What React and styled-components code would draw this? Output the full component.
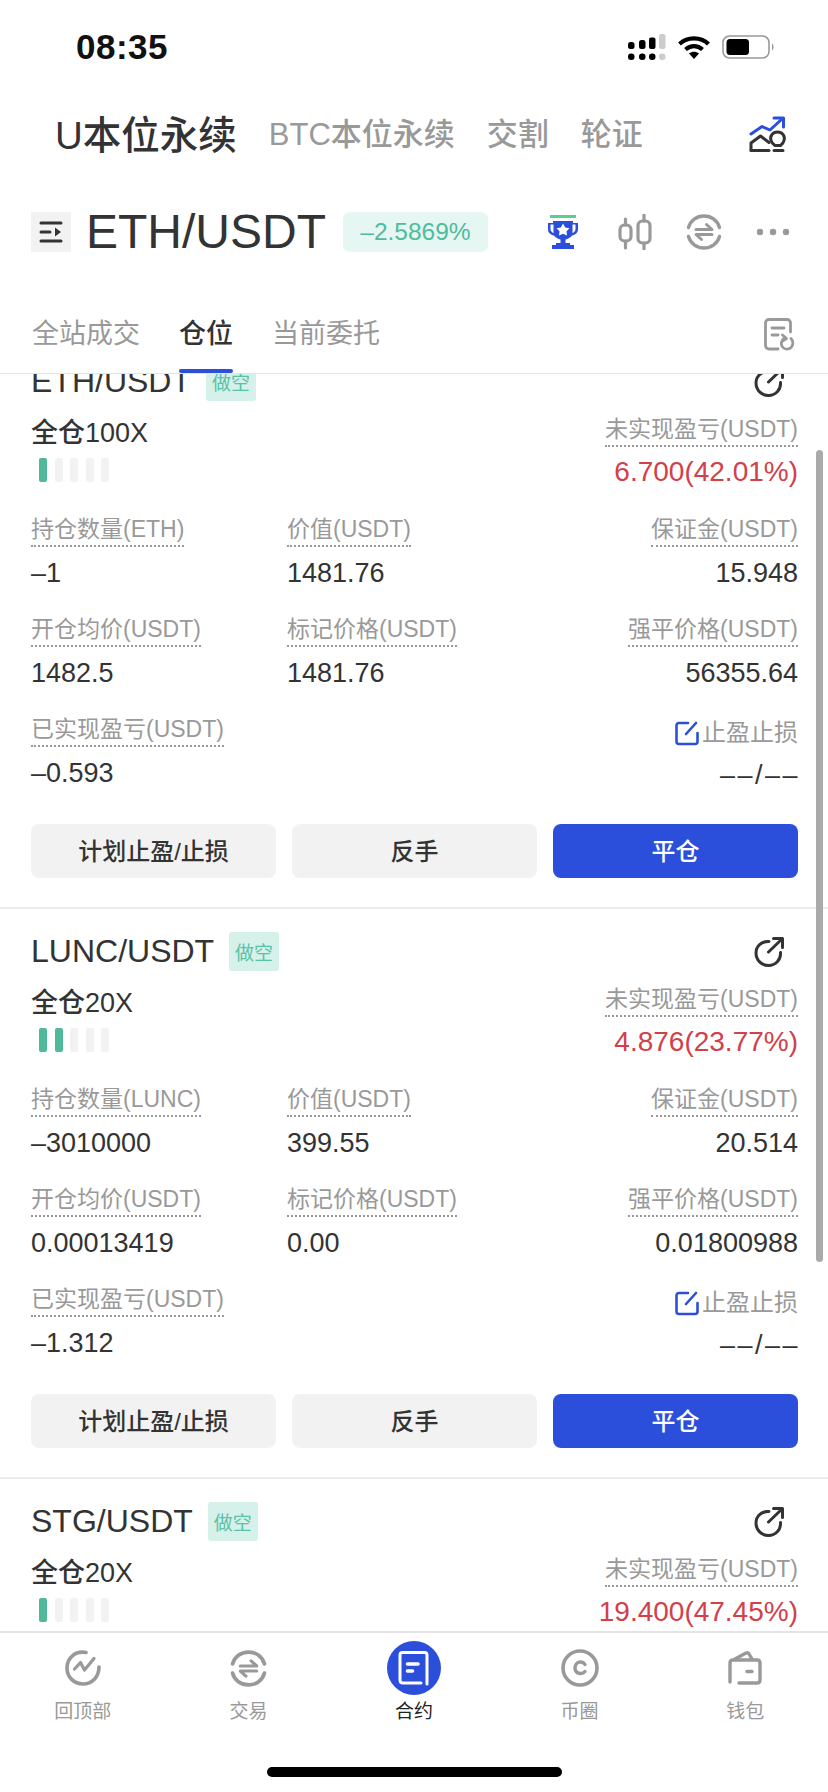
import styled, { createGlobalStyle } from "styled-components";

const BLUE = "#2c4fdb";
const GREY = "#999";
const DARK = "#333";

const GlobalStyle = createGlobalStyle`
  * {
    box-sizing: border-box;
  }
  html,
  body {
    margin: 0;
    background: #fff;
  }
  body {
    font-family: "Liberation Sans", "Noto Sans CJK SC", sans-serif;
    color: ${DARK};
  }
`;

const Page = styled.div`
  width: 828px;
  height: 1792px;
  display: flex;
  flex-direction: column;
  overflow: hidden;
  background: #fff;
`;

const StatusBar = styled.div`
  height: 94px;
  flex: none;
  padding: 0 53px 0 76px;
  display: flex;
  align-items: center;
  justify-content: space-between;
`;

const Time = styled.span`
  font-size: 35px;
  font-weight: 700;
  color: #111;
  letter-spacing: 0.5px;
`;

const StatusIcons = styled.div`
  display: flex;
  align-items: center;
  gap: 12px;
`;

const TopTabs = styled.div`
  height: 80px;
  flex: none;
  padding: 0 41px 5px 55px;
  display: flex;
  align-items: center;
  gap: 32px;
`;

const TopTab = styled.span`
  font-size: ${(p) => (p.$active ? "38.5px" : "31px")};
  font-weight: 500;
  color: ${(p) => (p.$active ? DARK : GREY)};
  white-space: nowrap;
`;

const TopAction = styled.div`
  margin-left: auto;
  margin-top: 5px;
  display: flex;
`;

const SymbolRow = styled.div`
  height: 116px;
  flex: none;
  padding: 0 38px 0 31px;
  display: flex;
  align-items: center;
`;

const DrawerButton = styled.div`
  width: 40px;
  height: 40px;
  background: #f2f2f2;
  display: flex;
  align-items: center;
  justify-content: center;
`;

const SymbolName = styled.h1`
  margin: 0 17px 0 15px;
  font-size: 48px;
  font-weight: 400;
  line-height: 1;
`;

const ChangeBadge = styled.span`
  width: 145px;
  height: 40px;
  border-radius: 7px;
  background: #e6f6f3;
  color: #4fbc9c;
  font-size: 24.5px;
  display: flex;
  align-items: center;
  justify-content: center;
`;

const SymbolActions = styled.div`
  margin-left: auto;
  display: flex;
  align-items: center;
  gap: 34px;

  & > svg:first-child {
    margin-right: 5px;
  }
`;

const TabBar = styled.div`
  height: 84px;
  flex: none;
  padding: 24px 33px 0 32px;
  display: flex;
  align-items: flex-start;
  gap: 39px;
  border-bottom: 1px solid #e4e4e4;
`;

const Tab = styled.span`
  position: relative;
  font-size: 27px;
  line-height: 40px;
  color: ${(p) => (p.$active ? DARK : GREY)};
  font-weight: ${(p) => (p.$active ? 500 : 400)};

  &::after {
    content: "";
    display: ${(p) => (p.$active ? "block" : "none")};
    position: absolute;
    left: 0;
    right: 0;
    top: 55px;
    height: 4px;
    border-radius: 2px;
    background: ${BLUE};
  }
`;

const TabAction = styled.div`
  margin-left: auto;
  padding-top: 4px;
  display: flex;
`;

const ListViewport = styled.div`
  position: relative;
  flex: 1;
  min-height: 0;
  overflow: hidden;
`;

const ScrollThumb = styled.div`
  position: absolute;
  right: 5px;
  top: 76px;
  width: 7px;
  height: 812px;
  border-radius: 4px;
  background: #aaa;
`;

const List = styled.div`
  margin-top: -35px;
`;

const Card = styled.section`
  height: 570px;
  padding: 23px 30px 0 31px;
  border-bottom: 2px solid #ececec;
`;

const TitleRow = styled.div`
  height: 39px;
  display: flex;
  align-items: center;
`;

const PairName = styled.span`
  font-size: 32px;
  margin-right: 15px;
`;

const SideTag = styled.span`
  width: 50px;
  height: 39px;
  border-radius: 3px;
  background: #d6f0ea;
  color: #58c3a7;
  font-size: 19px;
  display: flex;
  align-items: center;
  justify-content: center;
`;

const ShareButton = styled.div`
  margin-left: auto;
  margin-right: 14px;
  display: flex;
`;

const SummaryRow = styled.div`
  margin-top: 12px;
  display: flex;
  justify-content: space-between;
`;

const MarginMode = styled.div`
  margin-top: 4px;
  font-size: 27px;
  line-height: 32px;
  font-weight: 500;
`;

const LeverageBars = styled.div`
  margin: 9px 0 0 8px;
  display: flex;
  gap: 7.5px;
`;

const LeverageBar = styled.i`
  width: 8px;
  height: 24px;
  border-radius: 2px;
  background: ${(p) => (p.$on ? "#4fb99a" : "#f2f2f2")};
`;

const Stat = styled.div`
  display: flex;
  flex-direction: column;
  align-items: ${(p) => (p.$right ? "flex-end" : "flex-start")};
`;

const StatLabel = styled.span`
  font-size: 23px;
  line-height: 32px;
  color: ${GREY};
  border-bottom: 2px dotted #999;
  white-space: nowrap;
`;

const StatValue = styled.span`
  margin-top: 8px;
  font-size: 27px;
  line-height: 36px;
  white-space: nowrap;
`;

const ProfitValue = styled(StatValue)`
  margin-top: 7px;
  font-size: 28px;
  color: #d2404a;
`;

const StatGrid = styled.div`
  margin-top: 23px;
  display: grid;
  grid-template-columns: 256px 1fr 1fr;
  row-gap: 22px;
`;

const StopLabel = styled.span`
  margin-top: 4px;
  display: flex;
  align-items: center;
  gap: 2px;
  font-size: 24px;
  line-height: 32px;
  color: ${GREY};
`;

const StopValue = styled(StatValue)`
  margin-top: 8px;
  letter-spacing: 2.5px;
  margin-right: -2px;
`;

const ButtonRow = styled.div`
  margin-top: 31px;
  display: grid;
  grid-template-columns: repeat(3, 1fr);
  gap: 16px;
`;

const ActionButton = styled.button`
  height: 54px;
  padding: 0 0 3px;
  border: none;
  border-radius: 8px;
  font-family: inherit;
  font-size: 24px;
  font-weight: 500;
  color: ${(p) => (p.$primary ? "#fff" : DARK)};
  background: ${(p) => (p.$primary ? BLUE : "#f2f2f2")};
`;

const BottomNav = styled.nav`
  height: 161px;
  flex: none;
  padding-top: 8px;
  border-top: 2px solid #e4e4e4;
  background: #fff;
  position: relative;
  display: flex;
  flex-direction: column;
  align-items: center;
`;

const NavItems = styled.div`
  width: 100%;
  display: grid;
  grid-template-columns: repeat(5, 1fr);
`;

const NavItem = styled.div`
  display: flex;
  flex-direction: column;
  align-items: center;
  gap: 3px;
`;

const NavIcon = styled.div`
  height: 54px;
  display: flex;
  align-items: center;
  justify-content: center;
`;

const NavLabel = styled.span`
  font-size: 19px;
  line-height: 28px;
  color: ${(p) => (p.$active ? "#222" : GREY)};
`;

const HomeIndicator = styled.div`
  margin-top: 41px;
  width: 295px;
  height: 10px;
  border-radius: 5px;
  background: #000;
`;

function SignalIcon() {
  return (
    <svg width="38" height="27" viewBox="0 0 38 27">
      <g fill="#000">
        <rect x="0" y="8" width="6.5" height="7" rx="2.5" />
        <rect x="11" y="6" width="6.5" height="9" rx="2.5" />
        <rect x="21" y="3.5" width="6.5" height="11.5" rx="2" />
        <rect x="0" y="19.5" width="6.5" height="6.5" rx="3" />
        <rect x="11" y="19.5" width="6.5" height="6.5" rx="3" />
        <rect x="21" y="19.5" width="6.5" height="6.5" rx="3" />
      </g>
      <g fill="#ccc">
        <rect x="31" y="0" width="6.5" height="15" rx="2" />
        <rect x="31" y="19.5" width="6.5" height="6.5" rx="3" />
      </g>
    </svg>
  );
}

function WifiIcon() {
  return (
    <svg width="32" height="24" viewBox="0 0 32 24">
      <g fill="none" stroke="#000" strokeWidth="4.2">
        <path d="M1.5 9C9.5 1.5 22.5 1.5 30.5 9" />
        <path d="M7.5 14.5C12.5 10 19.5 10 24.5 14.5" />
      </g>
      <path d="M11 18.5C14 16 18 16 21 18.5L16 24Z" fill="#000" />
    </svg>
  );
}

function BatteryIcon() {
  return (
    <svg width="53" height="24" viewBox="0 0 53 24">
      <rect x="1" y="1" width="46" height="22" rx="6.5" fill="none" stroke="#999" strokeWidth="1.6" />
      <rect x="4.5" y="4" width="22.5" height="16" rx="3.5" fill="#000" />
      <path d="M50 8.5C52 9.5 52 14.5 50 15.5Z" fill="#999" />
    </svg>
  );
}

function InsightIcon() {
  return (
    <svg width="38" height="37" viewBox="0 0 38 37" fill="none" strokeWidth="3" strokeLinecap="round" strokeLinejoin="round">
      <path d="M2 18L13 10.5L21 14L33 3" stroke={BLUE} />
      <path d="M25 2H34.5V11" stroke={BLUE} />
      <path d="M2 34V27L11.5 20L20 26.5" stroke="#333" />
      <path d="M2 34.5H20M25 34.5H34" stroke="#333" />
      <path d="M26 29.5C21.5 26.5 20.5 21.5 23 18.5C25.5 15 31.5 15 34 18.5C36.5 21.5 35.5 26.5 31.5 29.5Z" stroke="#333" />
    </svg>
  );
}

function DrawerIcon() {
  return (
    <svg width="24" height="24" viewBox="0 0 24 24" fill="none" stroke="#333" strokeWidth="3" strokeLinecap="round">
      <path d="M2 3H22M2 12H11M2 21H22" />
      <path d="M16 7.5L22 12L16 16.5Z" fill="#333" stroke="none" />
    </svg>
  );
}

function TrophyIcon() {
  return (
    <svg width="32" height="34" viewBox="0 0 32 34">
      <rect x="3" y="0" width="26" height="3" fill="#5ccf8f" />
      <path d="M6 6H26V8H31V14C31 18 28 20 25 20.5C23.5 22.5 21 24 18.5 24.5V28H23V30H9V28H13.5V24.5C11 24 8.5 22.5 7 20.5C4 20 1 18 1 14V8H6Z" fill={BLUE} />
      <path d="M3.5 9.5V14C3.5 16 5 17.5 6.5 18V9.5ZM28.5 9.5V14C28.5 16 27 17.5 25.5 18V9.5Z" fill="#fff" />
      <path d="M16 8.5L18.2 12.4L22.5 13.2L19.5 16.3L20 20.5L16 18.7L12 20.5L12.5 16.3L9.5 13.2L13.8 12.4Z" fill="#fff" />
      <rect x="5" y="30" width="22" height="4" fill={BLUE} />
    </svg>
  );
}

function CandleIcon() {
  return (
    <svg width="34" height="36" viewBox="0 0 34 36" fill="none" stroke={GREY} strokeWidth="3.2" strokeLinecap="round">
      <rect x="2" y="11" width="11" height="16" rx="4.5" />
      <rect x="20" y="7" width="12" height="22" rx="4.5" />
      <path d="M7.5 5V11M7.5 27V34M26 1V7M26 29V35" />
    </svg>
  );
}

function SwapIcon({ size = 36, width = 3.4 }) {
  return (
    <svg width={size} height={size} viewBox="0 0 36 36" fill="none" stroke={GREY} strokeWidth={width} strokeLinecap="round">
      <path d="M2.5 13.5C4.5 6.5 10.5 2 18 2C25.5 2 31.5 6.5 33.5 13.5" />
      <path d="M2.5 22.5C4.5 29.5 10.5 34 18 34C25.5 34 31.5 29.5 33.5 22.5" />
      <path d="M10 15.5H26L20.5 10.5M26 20.5H10L15.5 25.5" strokeWidth="3" strokeLinejoin="round" />
    </svg>
  );
}

function DotsIcon() {
  return (
    <svg width="34" height="8" viewBox="0 0 34 8" fill={GREY}>
      <circle cx="4" cy="4" r="3.2" />
      <circle cx="17" cy="4" r="3.2" />
      <circle cx="30" cy="4" r="3.2" />
    </svg>
  );
}

function RecordIcon() {
  return (
    <svg width="31" height="33" viewBox="0 0 31 33" fill="none" stroke={GREY} strokeWidth="2.8" strokeLinecap="round" strokeLinejoin="round">
      <path d="M14 31H5C3 31 1.5 29.5 1.5 27.5V5C1.5 3 3 1.5 5 1.5H23C25 1.5 26.5 3 26.5 5V14" />
      <path d="M8 10H20M8 17H14" />
      <path d="M27 20.5C29.5 23 29.5 27 27 29.5C24.5 32 20.5 31.5 18.5 29C16.5 26.5 17 22.5 20 20.5" />
      <path d="M18.5 17L22.5 20.5L18.5 23" />
    </svg>
  );
}

function ShareIcon() {
  return (
    <svg width="30" height="30" viewBox="0 0 30 30" fill="none" stroke="#333" strokeWidth="3" strokeLinecap="round" strokeLinejoin="round">
      <path d="M15 4.5C8 4 2 9 2 16C2 23 7.5 28.5 14.5 28.5C21.5 28.5 27 23 26.5 15.5" />
      <path d="M14.5 15L28 2M19.5 1.5H28.5V10.5" />
    </svg>
  );
}

function EditIcon() {
  return (
    <svg width="25" height="25" viewBox="0 0 25 25" fill="none" stroke={BLUE} strokeWidth="2.6" strokeLinecap="round" strokeLinejoin="round">
      <path d="M13 2H4C2.5 2 1.5 3 1.5 4.5V20.5C1.5 22 2.5 23 4 23H20C21.5 23 22.5 22 22.5 20.5V12" />
      <path d="M11 13L21 2" />
    </svg>
  );
}

function BackTopIcon() {
  return (
    <svg width="36" height="36" viewBox="0 0 36 36" fill="none" stroke={GREY} strokeWidth="3.6" strokeLinecap="round" strokeLinejoin="round">
      <path d="M21 2.5C10 0.5 2 8.5 2 18C2 27 9 34 18 34C27 34 34 27 34 17" />
      <path d="M9.5 19L15.5 12.5L19.5 20L29 8.5" strokeWidth="3.2" />
    </svg>
  );
}

function ContractIcon() {
  return (
    <svg width="54" height="54" viewBox="0 0 54 54">
      <circle cx="27" cy="27" r="27" fill={BLUE} />
      <g fill="none" stroke="#fff" strokeWidth="3" strokeLinecap="round" strokeLinejoin="round">
        <path d="M40 43V14C40 12.5 39 11.5 37.5 11.5H15.5C14 11.5 13 12.5 13 14V39C13 41 14 42 16 42H34" />
        <path d="M20.5 23H31M20.5 30H25.5" strokeWidth="3.6" />
      </g>
    </svg>
  );
}

function CoinIcon() {
  return (
    <svg width="38" height="38" viewBox="0 0 38 38" fill="none" stroke={GREY} strokeWidth="3.6" strokeLinecap="round">
      <circle cx="19" cy="19" r="17" />
      <path d="M24 15.5C22.5 13 19.5 12.5 17 13.5C14 15 13.5 19 14.5 21.5C16 25 21.5 25.5 24 22.5" strokeWidth="3.4" />
    </svg>
  );
}

function WalletIcon() {
  return (
    <svg width="34" height="34" viewBox="0 0 34 34" fill="none" stroke={GREY} strokeWidth="3.4" strokeLinecap="round" strokeLinejoin="round">
      <path d="M2 31V12C2 10 3 9 5 9H29C31 9 32 10 32 12V29C32 31 31 32 29 32H11" />
      <path d="M7 8L18 2C19.5 1.5 20.5 2 21 3L24 8" />
      <path d="M19 20.5H24" />
    </svg>
  );
}

// the last card runs under the tab bar, so it only carries its summary
const POSITIONS = [
  {
    pair: "ETH/USDT",
    mode: "全仓100X",
    risk: 1,
    pnl: "6.700(42.01%)",
    details: {
      qtyLabel: "持仓数量(ETH)",
      qty: "–1",
      value: "1481.76",
      margin: "15.948",
      entry: "1482.5",
      mark: "1481.76",
      liq: "56355.64",
      realized: "–0.593",
    },
  },
  {
    pair: "LUNC/USDT",
    mode: "全仓20X",
    risk: 2,
    pnl: "4.876(23.77%)",
    details: {
      qtyLabel: "持仓数量(LUNC)",
      qty: "–3010000",
      value: "399.55",
      margin: "20.514",
      entry: "0.00013419",
      mark: "0.00",
      liq: "0.01800988",
      realized: "–1.312",
    },
  },
  {
    pair: "STG/USDT",
    mode: "全仓20X",
    risk: 1,
    pnl: "19.400(47.45%)",
  },
];

function Field({ label, value, right }) {
  return (
    <Stat $right={right}>
      <StatLabel>{label}</StatLabel>
      <StatValue>{value}</StatValue>
    </Stat>
  );
}

function PositionDetails({ details }) {
  return (
    <>
      <StatGrid>
        <Field label={details.qtyLabel} value={details.qty} />
        <Field label="价值(USDT)" value={details.value} />
        <Field label="保证金(USDT)" value={details.margin} right />
        <Field label="开仓均价(USDT)" value={details.entry} />
        <Field label="标记价格(USDT)" value={details.mark} />
        <Field label="强平价格(USDT)" value={details.liq} right />
        <Field label="已实现盈亏(USDT)" value={details.realized} />
        <span />
        <Stat $right>
          <StopLabel>
            <EditIcon />
            止盈止损
          </StopLabel>
          <StopValue>––/––</StopValue>
        </Stat>
      </StatGrid>
      <ButtonRow>
        <ActionButton>计划止盈/止损</ActionButton>
        <ActionButton>反手</ActionButton>
        <ActionButton $primary>平仓</ActionButton>
      </ButtonRow>
    </>
  );
}

function PositionCard({ position }) {
  return (
    <Card>
      <TitleRow>
        <PairName>{position.pair}</PairName>
        <SideTag>做空</SideTag>
        <ShareButton>
          <ShareIcon />
        </ShareButton>
      </TitleRow>
      <SummaryRow>
        <div>
          <MarginMode>{position.mode}</MarginMode>
          <LeverageBars>
            {[1, 2, 3, 4, 5].map((n) => (
              <LeverageBar key={n} $on={n <= position.risk} />
            ))}
          </LeverageBars>
        </div>
        <Stat $right>
          <StatLabel>未实现盈亏(USDT)</StatLabel>
          <ProfitValue>{position.pnl}</ProfitValue>
        </Stat>
      </SummaryRow>
      {position.details && <PositionDetails details={position.details} />}
    </Card>
  );
}

const NAV_ITEMS = [
  { label: "回顶部", icon: <BackTopIcon /> },
  { label: "交易", icon: <SwapIcon size={37} width={3.6} /> },
  { label: "合约", icon: <ContractIcon />, active: true },
  { label: "币圈", icon: <CoinIcon /> },
  { label: "钱包", icon: <WalletIcon /> },
];

export default function App() {
  return (
    <Page>
      <GlobalStyle />
      <StatusBar>
        <Time>08:35</Time>
        <StatusIcons>
          <SignalIcon />
          <WifiIcon />
          <BatteryIcon />
        </StatusIcons>
      </StatusBar>
      <TopTabs>
        <TopTab $active>U本位永续</TopTab>
        <TopTab>BTC本位永续</TopTab>
        <TopTab>交割</TopTab>
        <TopTab>轮证</TopTab>
        <TopAction>
          <InsightIcon />
        </TopAction>
      </TopTabs>
      <SymbolRow>
        <DrawerButton>
          <DrawerIcon />
        </DrawerButton>
        <SymbolName>ETH/USDT</SymbolName>
        <ChangeBadge>–2.5869%</ChangeBadge>
        <SymbolActions>
          <TrophyIcon />
          <CandleIcon />
          <SwapIcon />
          <DotsIcon />
        </SymbolActions>
      </SymbolRow>
      <TabBar>
        <Tab>全站成交</Tab>
        <Tab $active>仓位</Tab>
        <Tab>当前委托</Tab>
        <TabAction>
          <RecordIcon />
        </TabAction>
      </TabBar>
      <ListViewport>
        <List>
          {POSITIONS.map((position) => (
            <PositionCard key={position.pair} position={position} />
          ))}
        </List>
        <ScrollThumb />
      </ListViewport>
      <BottomNav>
        <NavItems>
          {NAV_ITEMS.map((item) => (
            <NavItem key={item.label}>
              <NavIcon>{item.icon}</NavIcon>
              <NavLabel $active={item.active}>{item.label}</NavLabel>
            </NavItem>
          ))}
        </NavItems>
        <HomeIndicator />
      </BottomNav>
    </Page>
  );
}
